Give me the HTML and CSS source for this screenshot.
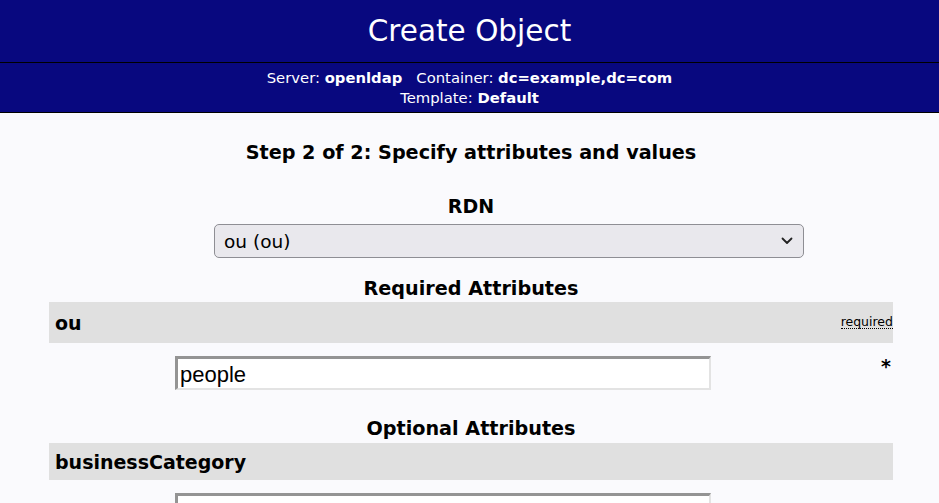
FILE: index.html
```html
<!DOCTYPE html>
<html>
<head>
<meta charset="utf-8">
<link rel="stylesheet" href="styles.css">
</head>
<body>
<div class="head">
  <h1 class="title">Create Object</h1>
</div>
<div class="subhead">
  <div>Server: <b>openldap</b>&nbsp;&nbsp; Container: <b>dc=example,dc=com</b></div>
  <div>Template: <b>Default</b></div>
</div>
<div class="main">
  <h2 class="step">Step 2 of 2: Specify attributes and values</h2>
  <div class="rdn">
    <div class="label">RDN</div>
    <div class="select"><span>ou (ou)</span>
      <svg width="12" height="8" viewBox="0 0 12 8"><path d="M1.5 1.5 L6 6 L10.5 1.5" fill="none" stroke="#222" stroke-width="1.8" stroke-linecap="round" stroke-linejoin="round"/></svg>
    </div>
  </div>
  <div class="section">
    <div class="sechead">Required Attributes</div>
    <div class="attrrow"><span class="name">ou</span><span class="req">required</span></div>
    <div class="valrow">
      <div class="input">people</div>
      <span class="star">*</span>
    </div>
  </div>
  <div class="section">
    <div class="sechead opt">Optional Attributes</div>
    <div class="attrrow short"><span class="name">businessCategory</span></div>
    <div class="valrow">
      <div class="input"></div>
    </div>
  </div>
</div>
</body>
</html>
```
FILE: styles.css
```css
html, body {
  margin: 0;
  padding: 0;
  background: #fafafd;
  font-family: "DejaVu Sans", Verdana, sans-serif;
  color: #000;
  overflow: hidden;
}
.head {
  background: #08087f;
  height: 62px;
  border-bottom: 1px solid #000;
  display: flex;
  align-items: center;
  justify-content: center;
}
.title {
  margin: 0;
  color: #fff;
  font-weight: normal;
  font-size: 29.5px;
  line-height: 1;
  padding-top: 1px;
}
.subhead {
  background: #08087f;
  color: #fff;
  font-size: 14.8px;
  line-height: 20px;
  padding-top: 5px;
  box-sizing: border-box;
  text-align: center;
  border-bottom: 1px solid #000;
  height: 50px;
}
.main {
  width: 844px;
  margin-left: 49px;
}
.step {
  margin: 0;
  padding-top: 29px;
  font-size: 19.2px;
  line-height: 22px;
  text-align: center;
}
.rdn {
  margin-top: 31px;
  display: flex;
  flex-direction: column;
}
.label {
  font-weight: bold;
  font-size: 19px;
  line-height: 22px;
  text-align: center;
}
.select {
  margin-top: 7px;
  margin-left: 165px;
  width: 590px;
  height: 34px;
  box-sizing: border-box;
  border: 1px solid #8e8e94;
  border-radius: 5px;
  background: #e9e8ed;
  display: flex;
  align-items: center;
  justify-content: space-between;
  padding: 0 10px 0 9px;
  font-size: 18.5px;
}
.select span { padding-top: 1px; }
.section {
  display: flex;
  flex-direction: column;
}
.sechead {
  font-weight: bold;
  font-size: 19.2px;
  line-height: 22px;
  text-align: center;
  margin-top: 20px;
}
.sechead.opt { margin-top: 28px; }
.attrrow {
  margin-top: 2px;
  background: #e0e0e0;
  height: 41px;
  display: flex;
  align-items: center;
  justify-content: space-between;
  padding: 0 0 0 6px;
}
.attrrow.short { height: 37px; margin-top: 3px; }
.name {
  font-weight: bold;
  font-size: 19px;
}
.req {
  font-size: 12.5px;
  border-bottom: 1px dotted #000;
  line-height: 13px;
  margin-bottom: 2px;
}
.valrow {
  display: flex;
  align-items: flex-start;
  padding-top: 13px;
  padding-left: 126px;
}
.input {
  width: 536px;
  height: 34px;
  box-sizing: border-box;
  background: #fff;
  border-style: solid;
  border-width: 3px 2px 2px 3px;
  border-color: #949494 #e3e3e3 #e3e3e3 #949494;
  font-family: "Liberation Sans", Arial, sans-serif;
  font-size: 22px;
  line-height: 28px;
  padding: 2px 0 0 2px;
}
.star {
  margin-left: auto;
  margin-right: 2px;
  font-size: 19px;
  font-weight: bold;
  line-height: 20px;
}
```
